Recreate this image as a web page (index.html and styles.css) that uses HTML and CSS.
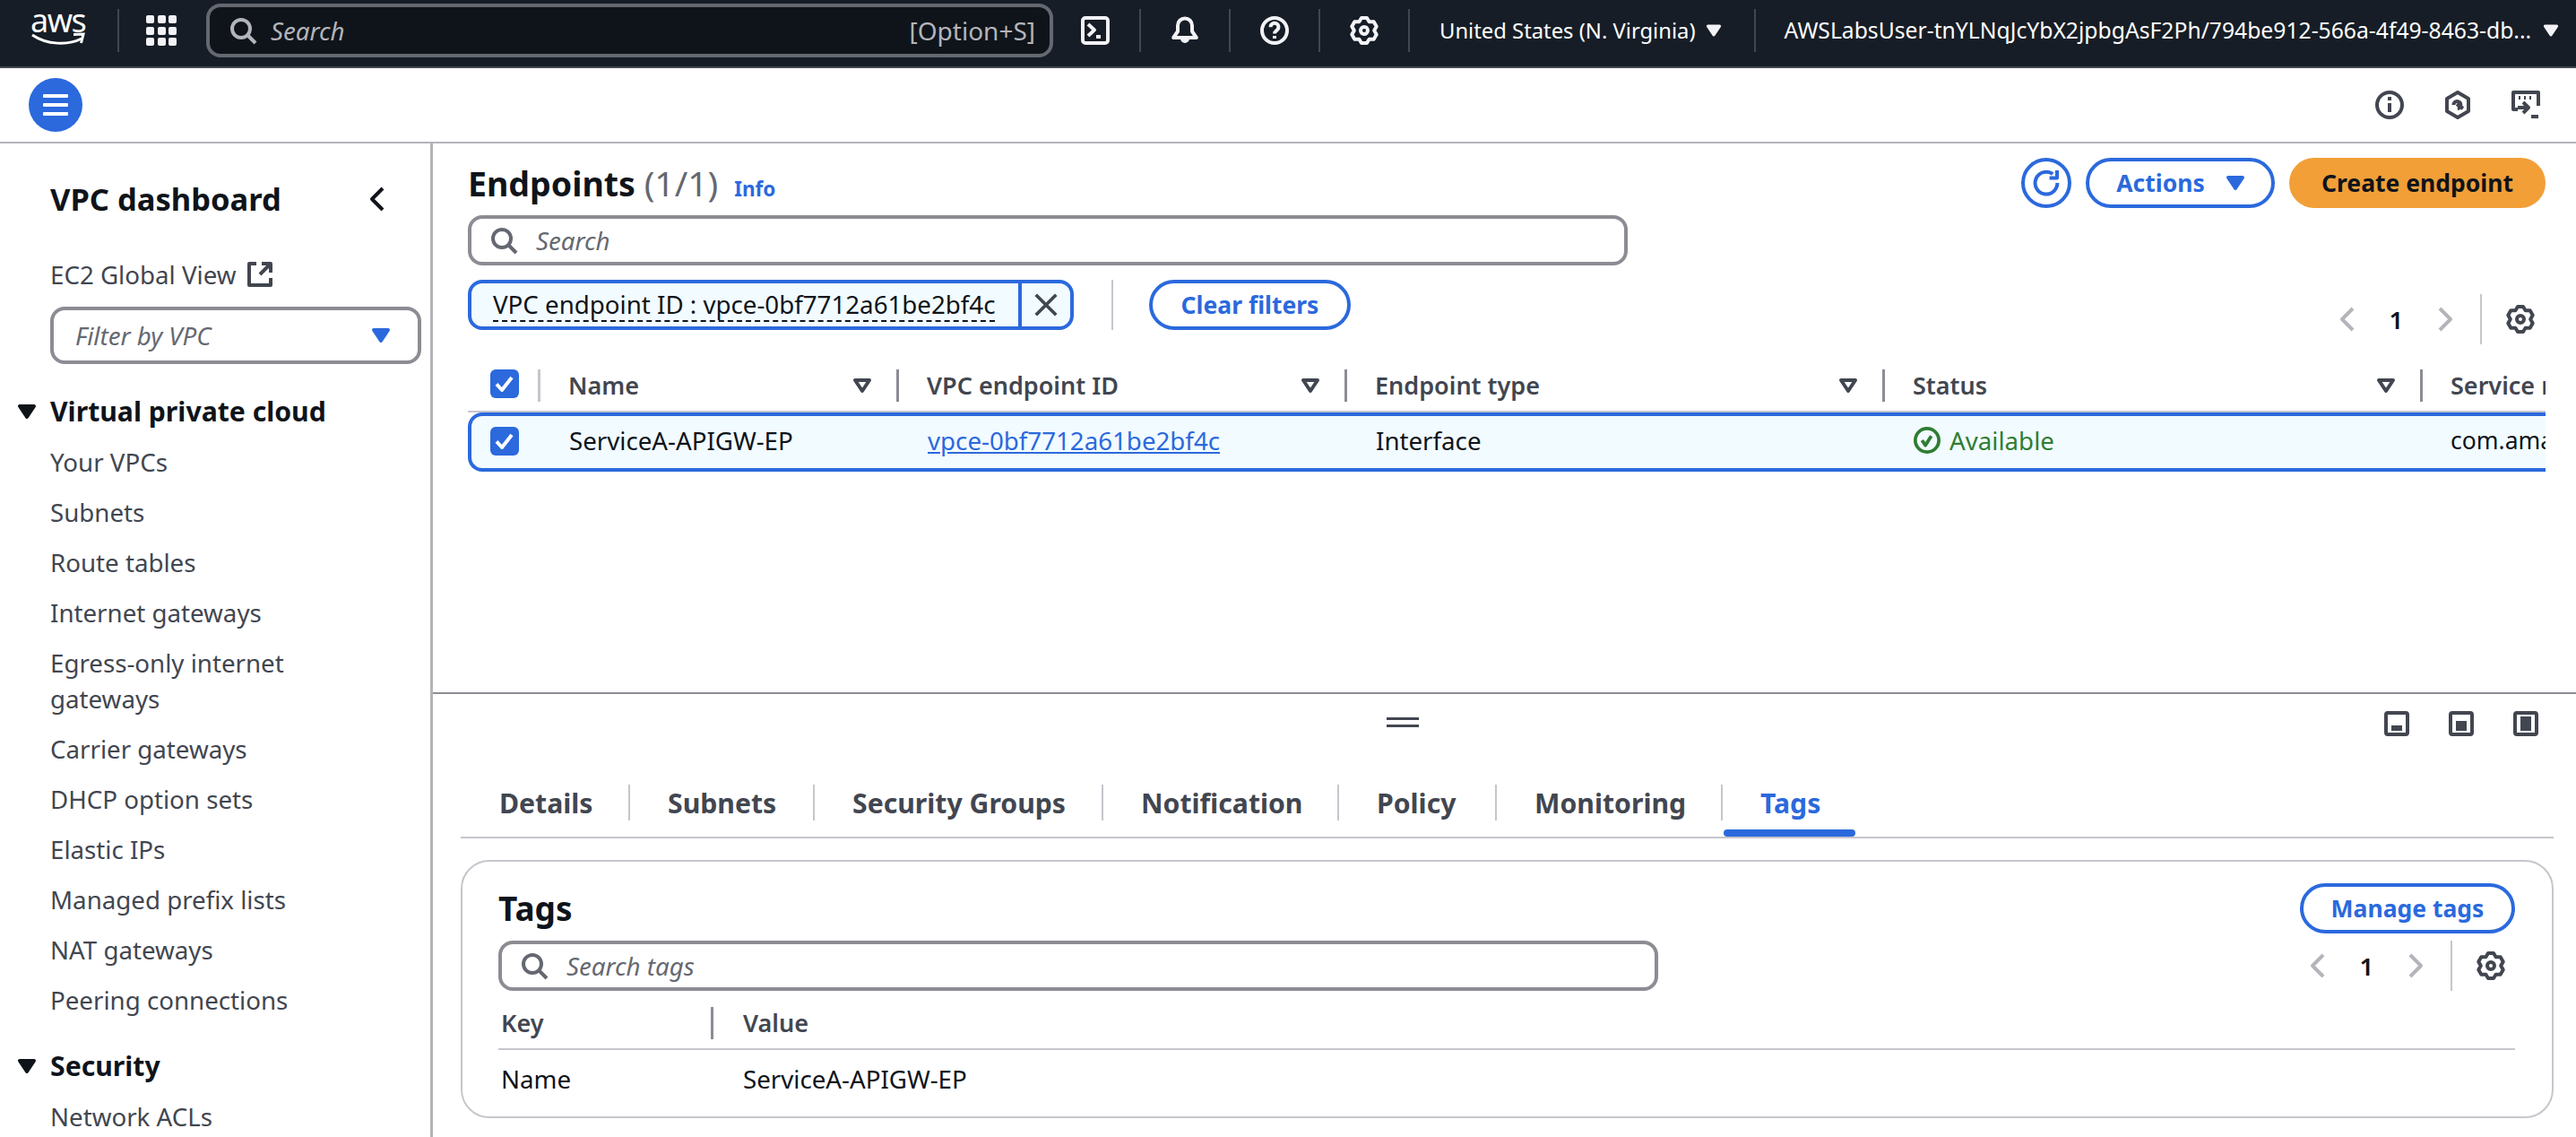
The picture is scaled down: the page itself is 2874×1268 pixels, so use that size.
FILE: index.html
```html
<!DOCTYPE html>
<html lang="en">
<head>
<meta charset="utf-8">
<title>Endpoints | VPC Console</title>
<link rel="stylesheet" href="styles.css">
</head>
<body>
<svg class="defs" aria-hidden="true">
  <symbol id="i-search" viewBox="0 0 16 16"><circle cx="7" cy="7" r="5"/><path d="m15 15-4.5-4.5"/></symbol>
  <symbol id="i-gear" viewBox="0 0 16 16"><path d="M6.5 1h3l1.3 2.15 2.55.03 1.5 2.6L13.6 8l1.25 2.22-1.5 2.6-2.55.03L9.5 15h-3l-1.3-2.15-2.55-.03-1.5-2.6L2.4 8 1.15 5.78l1.5-2.6 2.55-.03Z"/><circle cx="8" cy="8" r="2"/></symbol>
  <symbol id="i-shell" viewBox="0 0 16 16"><rect x="1" y="1" width="14" height="14" rx="1.5"/><path d="m4 4.5 3.5 3.2L4 11"/><path d="M8.5 11.5h2.5"/></symbol>
  <symbol id="i-bell" viewBox="0 0 16 16"><path d="M8 1.2A4 4 0 0 0 4 5.2v3.3L1.6 12h12.8L12 8.500V5.200a4 4 0 0 0-4-4Z"/><path d="M6.500 12.500a1.500 1.500 0 0 0 3 0"/></symbol>
  <symbol id="i-help" viewBox="0 0 16 16"><circle cx="8" cy="8" r="7"/><path d="M5.800 6.100a2.200 2.200 0 1 1 3.400 1.800C8.500 8.400 8 8.800 8 9.800"/><path d="M8 11v1.500"/></symbol>
  <symbol id="i-info" viewBox="0 0 16 16"><circle cx="8" cy="8" r="7"/><path d="M8 7v5"/><path d="M8 3.500V5.500"/></symbol>
  <symbol id="i-hex" viewBox="0 0 16 16"><path d="M8 1l6 3.500v7L8 15l-6-3.500v-7Z"/><path d="M5.700 8a2 2 0 1 1 2.200 2M7.500 7.500l3.500 2.500"/></symbol>
  <symbol id="i-feedback" viewBox="0 0 16 16"><path d="M3.500 10.500H1V1h14v7.500"/><path d="M4 4h1M7 4h1M10 4h1"/><path d="M3.500 9.500H9M6.500 6.500l3 3-3 3"/><path d="M11 14.500h4"/></symbol>
  <symbol id="i-external" viewBox="0 0 16 16"><path d="M14 7V2H9M14 2 8 8M6 2H2v12h12v-4"/></symbol>
  <symbol id="i-left" viewBox="0 0 16 16"><path d="M11 2 5 8l6 6"/></symbol>
  <symbol id="i-right" viewBox="0 0 16 16"><path d="m5 2 6 6-6 6"/></symbol>
  <symbol id="i-sort" viewBox="0 0 16 16"><path d="M4 5h8l-4 6Z"/></symbol>
  <symbol id="i-x" viewBox="0 0 16 16"><path d="m2 2 12 12M14 2 2 14"/></symbol>
  <symbol id="i-refresh" viewBox="0 0 16 16"><path d="M14.200 8a6.200 6.200 0 1 1-2.600-5"/><path d="M14 1v4.200H9.800"/></symbol>
  <symbol id="i-check" viewBox="0 0 16 16"><path d="m3.500 8.200 3 3.300 5.500-7"/></symbol>
  <symbol id="i-ok" viewBox="0 0 16 16"><circle cx="8" cy="8" r="7"/><path d="m5 8 2 3 3.500-5.500"/></symbol>
  <symbol id="i-panel1" viewBox="0 0 16 16"><rect x="2" y="2" width="12" height="12" rx="1"/><rect class="solid" x="5" y="9" width="6" height="3"/></symbol>
  <symbol id="i-panel2" viewBox="0 0 16 16"><rect x="2" y="2" width="12" height="12" rx="1"/><rect class="solid" x="5" y="6.500" width="6" height="5.500"/></symbol>
  <symbol id="i-panel3" viewBox="0 0 16 16"><rect x="2" y="2" width="12" height="12" rx="1"/><rect class="solid" x="5" y="4" width="6" height="8"/></symbol>
</svg>

<header class="topbar">
  <div class="logo">
    <span class="logo-text">aws</span>
    <svg class="smile" viewBox="0 0 62 16"><path d="M2 3c16 11 40 12 55 4"/><path d="M48 2.500 59 2l-2.500 10"/></svg>
  </div>
  <span class="top-sep sep-logo"></span>
  <div class="apps">
    <i></i><i></i><i></i><i></i><i></i><i></i><i></i><i></i><i></i>
  </div>
  <div class="top-search">
    <svg class="ic"><use href="#i-search"/></svg>
    <span class="top-search-text">Search</span>
    <span class="top-search-key">[Option+S]</span>
  </div>
  <svg class="ic"><use href="#i-shell"/></svg>
  <span class="top-sep"></span>
  <svg class="ic"><use href="#i-bell"/></svg>
  <span class="top-sep"></span>
  <svg class="ic"><use href="#i-help"/></svg>
  <span class="top-sep"></span>
  <svg class="ic"><use href="#i-gear"/></svg>
  <span class="top-sep"></span>
  <span class="top-menu top-region">United States (N. Virginia)</span>
  <svg class="ic caret caret-region"><use href="#i-sort"/></svg>
  <span class="top-sep sep-user"></span>
  <span class="top-menu top-user">AWSLabsUser-tnYLNqJcYbX2jpbgAsF2Ph/794be912-566a-4f49-8463-db...</span>
  <svg class="ic caret"><use href="#i-sort"/></svg>
</header>

<div class="subbar">
  <button class="burger" aria-label="Open navigation"><i></i><i></i><i></i></button>
  <div class="subbar-icons">
    <svg class="ic"><use href="#i-info"/></svg>
    <svg class="ic"><use href="#i-hex"/></svg>
    <svg class="ic"><use href="#i-feedback"/></svg>
  </div>
</div>

<div class="shell">
  <nav class="sidebar">
    <div class="side-head">
      <span>VPC dashboard</span>
      <svg class="ic"><use href="#i-left"/></svg>
    </div>
    <div class="side-global">EC2 Global View <svg class="ic"><use href="#i-external"/></svg></div>
    <div class="side-filter">
      <span>Filter by VPC</span>
      <svg class="ic"><use href="#i-sort"/></svg>
    </div>
    <div class="side-section"><svg class="ic"><use href="#i-sort"/></svg>Virtual private cloud</div>
    <ul class="side-list">
      <li>Your VPCs</li>
      <li>Subnets</li>
      <li>Route tables</li>
      <li>Internet gateways</li>
      <li>Egress-only internet gateways</li>
      <li>Carrier gateways</li>
      <li>DHCP option sets</li>
      <li>Elastic IPs</li>
      <li>Managed prefix lists</li>
      <li>NAT gateways</li>
      <li>Peering connections</li>
    </ul>
    <div class="side-section side-security"><svg class="ic"><use href="#i-sort"/></svg>Security</div>
    <ul class="side-list">
      <li>Network ACLs</li>
    </ul>
  </nav>

  <main class="main">
    <section class="list">
      <div class="list-head">
        <h1 class="title">Endpoints <span class="count">(1/1)</span></h1>
        <a class="info">Info</a>
        <div class="actions">
          <button class="btn btn-icon"><svg class="ic"><use href="#i-refresh"/></svg></button>
          <button class="btn btn-actions">Actions <svg class="ic"><use href="#i-sort"/></svg></button>
          <button class="btn btn-primary">Create endpoint</button>
        </div>
      </div>
      <div class="searchbox">
        <svg class="ic"><use href="#i-search"/></svg>
        <span>Search</span>
      </div>
      <div class="filter-row">
        <div class="chip">
          <span class="chip-body"><span class="chip-text">VPC endpoint ID : vpce-0bf7712a61be2bf4c</span></span>
          <span class="chip-close"><svg class="ic"><use href="#i-x"/></svg></span>
        </div>
        <span class="filter-sep"></span>
        <button class="btn btn-clear">Clear filters</button>
        <div class="pager pager-top">
          <svg class="ic off"><use href="#i-left"/></svg>
          <span class="pager-num">1</span>
          <svg class="ic off"><use href="#i-right"/></svg>
          <span class="pager-sep"></span>
          <svg class="ic"><use href="#i-gear"/></svg>
        </div>
      </div>

      <div class="table">
        <div class="t-head">
          <div class="t-sel"><span class="checkbox"><svg class="ic"><use href="#i-check"/></svg></span></div>
          <div class="th th-first"><span>Name</span><svg class="ic"><use href="#i-sort"/></svg></div>
          <div class="th"><span>VPC endpoint ID</span><svg class="ic"><use href="#i-sort"/></svg></div>
          <div class="th"><span>Endpoint type</span><svg class="ic"><use href="#i-sort"/></svg></div>
          <div class="th"><span>Status</span><svg class="ic"><use href="#i-sort"/></svg></div>
          <div class="th th-last"><span>Service name</span></div>
        </div>
        <div class="t-row">
          <div class="t-sel-row"><span class="checkbox"><svg class="ic"><use href="#i-check"/></svg></span></div>
          <div class="td">ServiceA-APIGW-EP</div>
          <div class="td"><a class="link">vpce-0bf7712a61be2bf4c</a></div>
          <div class="td">Interface</div>
          <div class="td td-ok"><svg class="ic"><use href="#i-ok"/></svg>Available</div>
          <div class="td td-last">com.amazonaws.us-east-1.execute-api</div>
        </div>
      </div>
    </section>

    <section class="split">
      <div class="split-top">
        <div class="handle"><i></i><i></i></div>
        <div class="split-icons">
          <svg class="ic"><use href="#i-panel1"/></svg>
          <svg class="ic"><use href="#i-panel2"/></svg>
          <svg class="ic"><use href="#i-panel3"/></svg>
        </div>
      </div>
      <div class="tabs">
        <div class="tab tab-first">Details</div>
        <div class="tab">Subnets</div>
        <div class="tab">Security Groups</div>
        <div class="tab">Notification</div>
        <div class="tab">Policy</div>
        <div class="tab">Monitoring</div>
        <div class="tab tab-active">Tags</div>
      </div>
      <div class="card">
        <div class="card-head">
          <h2 class="card-title">Tags</h2>
          <button class="btn btn-manage">Manage tags</button>
        </div>
        <div class="card-tools">
          <div class="searchbox">
            <svg class="ic"><use href="#i-search"/></svg>
            <span>Search tags</span>
          </div>
          <div class="pager pager-card">
            <svg class="ic off"><use href="#i-left"/></svg>
            <span class="pager-num">1</span>
            <svg class="ic off"><use href="#i-right"/></svg>
            <span class="pager-sep"></span>
            <svg class="ic"><use href="#i-gear"/></svg>
          </div>
        </div>
        <div class="tag-head">
          <div class="tag-key">Key</div>
          <div class="tag-value">Value</div>
        </div>
        <div class="tag-row">
          <div class="tag-key">Name</div>
          <div class="tag-cell">ServiceA-APIGW-EP</div>
        </div>
      </div>
    </section>
  </main>
</div>
</body>
</html>
```
FILE: styles.css
```css
* { box-sizing: border-box; }
html, body { margin: 0; padding: 0; }
body {
  width: 2874px;
  height: 1268px;
  overflow: hidden;
  background: #fff;
  color: #0f141a;
  font-family: "Noto Sans", "Open Sans", sans-serif;
  font-size: 27.7px;
  line-height: 40px;
}
.defs { display: none; }
button { font: inherit; background: none; cursor: pointer; padding: 0; }
h1, h2 { margin: 0; }
ul { list-style: none; margin: 0; padding: 0; }

.ic {
  width: 32px;
  height: 32px;
  flex: none;
  fill: none;
  stroke: currentColor;
  stroke-width: 2;
  stroke-linejoin: round;
}
.solid { fill: currentColor; stroke: none; }

/* top bar */
.topbar {
  height: 76px;
  background: #161d26;
  border-bottom: 2px solid #424650;
  color: #f3f3f7;
  display: flex;
  align-items: center;
  padding: 0 0 6px 34px;
}
.logo { width: 62px; height: 40px; display: flex; flex-direction: column; }
.logo-text {
  color: #fff;
  font-size: 36px;
  line-height: 26px;
  height: 26px;
  letter-spacing: -1.500px;
  margin-top: -4px;
}
.smile { width: 62px; height: 16px; fill: none; stroke: #fff; stroke-width: 3; flex: none; }
.top-sep { width: 2px; height: 48px; background: #424650; margin: 0 33px; flex: none; }
.sep-logo { margin: 0 30px 0 35px; }
.sep-user { margin: 0 32px 0 32px; }
.apps { width: 34px; display: grid; grid-template-columns: repeat(3, 9px); gap: 3.500px; }
.apps i { height: 9px; background: #f3f3f7; border-radius: 2px; display: block; }
.top-search {
  width: 945px;
  height: 60px;
  margin: 0 31px 0 33px;
  border: 4px solid #656871;
  border-radius: 16px;
  background: #0f141a;
  display: flex;
  align-items: center;
  padding: 0 16px 0 21px;
  color: #b4b4bb;
}
.top-search .ic { margin-right: 15px; }
.top-search-text { font-style: italic; font-size: 27.7px; }
.top-search-key { margin-left: auto; font-size: 28px; }
.top-menu { color: #fff; white-space: nowrap; }
.top-region { font-size: 23.8px; }
.top-user { font-size: 24.7px; }
.caret { width: 26px; height: 26px; fill: #f3f3f7; margin-left: 9px; }
.caret-region { margin-left: 7px; }

/* sub bar */
.subbar {
  height: 84px;
  border-bottom: 2px solid #b4b4bb;
  display: flex;
  align-items: center;
  padding: 0 40px 0 32px;
  color: #424650;
}
.burger {
  width: 60px;
  height: 60px;
  border-radius: 50%;
  border: 0;
  background: #2b69dd;
  display: flex;
  flex-direction: column;
  align-items: center;
  justify-content: center;
  gap: 6px;
}
.burger i { width: 28px; height: 4px; background: #fff; display: block; border-radius: 1px; }
.subbar-icons { margin-left: auto; display: flex; gap: 44px; }

/* shell */
.shell { display: flex; height: 1108px; overflow: hidden; }

/* sidebar */
.sidebar {
  width: 483px;
  flex: none;
  border-right: 3px solid #b4b4bb;
  padding: 40px 10px 0 56px;
  color: #424650;
}
.side-head {
  height: 44px;
  display: flex;
  align-items: center;
  justify-content: space-between;
  color: #0f141a;
  font-size: 34.5px;
  font-weight: 700;
  padding-right: 33px;
}
.side-global {
  margin-top: 42px;
  height: 40px;
  display: flex;
  align-items: center;
  gap: 11px;
}
.side-filter {
  margin-top: 16px;
  width: 414px;
  height: 64px;
  border: 4px solid #8c8c94;
  border-radius: 16px;
  display: flex;
  align-items: center;
  justify-content: space-between;
  padding: 0 25px 0 24px;
  color: #656871;
  font-style: italic;
}
.side-filter .ic { color: #2b69dd; fill: #2b69dd; }
.side-section {
  margin: 33px 0 0 -42px;
  height: 40px;
  display: flex;
  align-items: center;
  gap: 10px;
  color: #0f141a;
  font-size: 30.2px;
  font-weight: 700;
}
.side-section .ic { fill: #0f141a; }
.side-security { margin-top: 26px; }
.side-list { margin-top: 8px; padding-right: 60px; }
.side-list li { padding: 8px 0; }

/* main */
.main { flex: 1; min-width: 0; display: flex; flex-direction: column; }
.list { height: 612px; padding: 16px 34px 0 39px; }
.list-head { display: flex; align-items: center; height: 56px; }
.title { font-size: 37.5px; font-weight: 700; line-height: 56px; white-space: nowrap; }
.count { color: #656871; font-weight: 400; font-size: 39px; }
.info { color: #2b69dd; font-size: 22.5px; font-weight: 700; margin: 14px 0 0 18px; }
.actions { margin-left: auto; display: flex; gap: 16px; }
.btn {
  height: 56px;
  border-radius: 28px;
  border: 4px solid #2b69dd;
  color: #2b69dd;
  font-size: 26.5px;
  font-weight: 700;
  display: flex;
  align-items: center;
  justify-content: center;
  white-space: nowrap;
}
.btn-icon { width: 56px; }
.btn-actions { width: 211px; gap: 18px; padding-left: 6px; }
.btn-actions .ic { fill: #2b69dd; }
.btn-primary { width: 286px; background: #f29f38; border-color: #f29f38; color: #0f141a; }
.btn-clear { width: 225px; margin-left: 40px; }
.btn-manage { width: 240px; }

.searchbox {
  width: 1294px;
  height: 56px;
  border: 4px solid #8c8c94;
  border-radius: 16px;
  display: flex;
  align-items: center;
  gap: 20px;
  padding: 0 0 0 20px;
  color: #656871;
  font-style: italic;
}
.list > .searchbox { margin-top: 8px; }

.filter-row { margin-top: 16px; display: flex; align-items: flex-start; height: 72px; }
.chip {
  width: 676px;
  height: 56px;
  border: 4px solid #2b69dd;
  border-radius: 16px;
  background: #f2fbff;
  display: flex;
}
.chip-body { width: 614px; padding-left: 24px; border-right: 4px solid #2b69dd; display: flex; align-items: center; }
.chip-text { line-height: 36px; border-bottom: 2px dashed #0f141a; white-space: nowrap; }
.chip-close { flex: 1; display: flex; align-items: center; justify-content: center; color: #424650; }
.chip-close .ic { width: 30px; height: 30px; }
.filter-sep { width: 2px; height: 56px; background: #c6c6cd; margin-left: 42px; }

.pager { margin-left: auto; display: flex; align-items: center; height: 56px; }
.pager-top { margin-top: 16px; margin-right: 12px; }
.pager-card { margin-right: 11px; }
.pager .ic { color: #424650; }
.pager .off { color: #b4b4bb; }
.pager-num { width: 77px; text-align: center; font-weight: 600; }
.pager-sep { width: 2px; height: 56px; background: #c6c6cd; margin: 0 27px 0 23px; }

/* table */
.table { margin-top: 28px; width: 2318px; overflow: hidden; }
.t-head {
  display: grid;
  grid-template-columns: 78px 400px 500px 600px 600px 140px;
  height: 48px;
  border-bottom: 2px solid #c6c6cd;
  align-items: start;
  color: #424650;
  font-size: 27px;
  font-weight: 600;
}
.t-sel { padding-left: 25px; height: 36px; display: flex; align-items: flex-start; }
.th {
  height: 36px;
  border-left: 3px solid #8c8c94;
  padding: 0 22px 0 31px;
  display: flex;
  align-items: center;
  justify-content: space-between;
  white-space: nowrap;
  overflow: hidden;
}
.th-first { border-left-color: #c6c6cd; }
.th-last { padding-right: 0; justify-content: flex-start; }
.checkbox {
  width: 32px;
  height: 32px;
  background: #2b69dd;
  border-radius: 6px;
  display: flex;
  color: #fff;
  flex: none;
}
.t-row {
  display: grid;
  grid-template-columns: 74px 400px 500px 600px 600px 140px;
  height: 66px;
  border: 4px solid #2b69dd;
  border-right: 0;
  border-radius: 16px 0 0 16px;
  background: #f2fbff;
  align-items: center;
}
.t-sel-row { padding-left: 21px; display: flex; margin-bottom: 2px; }
.td { padding-left: 35px; padding-bottom: 4px; white-space: nowrap; overflow: hidden; }
.td-last { padding-left: 34px; font-size: 26.5px; }
.link { color: #2b69dd; text-decoration: underline; }
.td-ok { display: flex; align-items: center; gap: 10px; color: #2f7d32; }
.td-ok .ic { width: 30px; height: 30px; }

/* split panel */
.split { flex: 1; border-top: 2px solid #8c8c94; min-height: 0; }
.split-top { display: flex; align-items: center; height: 32px; margin-top: 17px; padding: 0 40px 0 1064px; color: #424650; }
.handle { width: 36px; display: flex; flex-direction: column; gap: 5px; margin-top: -4px; }
.handle i { height: 3px; background: #424650; display: block; }
.split-icons { margin-left: auto; display: flex; gap: 40px; }
.tabs {
  margin: 52px 25px 0 31px;
  display: grid;
  grid-template-columns: 187px 206px 322px 263px 176px 252px 153px 1fr;
  height: 60px;
  border-bottom: 2px solid #c6c6cd;
  color: #424650;
  font-size: 30.2px;
  font-weight: 700;
}
.tab { height: 40px; border-left: 2px solid #c6c6cd; padding-left: 42px; line-height: 42px; white-space: nowrap; position: relative; }
.tab-first { border-left: 0; padding-left: 43px; }
.tab-active { color: #2b69dd; }
.tab-active::after {
  content: "";
  position: absolute;
  left: 1px;
  bottom: -18px;
  width: 147px;
  height: 8px;
  border-radius: 4px;
  background: #2b69dd;
}
.card {
  margin: 24px 25px 0 31px;
  height: 288px;
  border: 2px solid #c6c6cd;
  border-radius: 32px;
  padding: 24px 41px 0 40px;
}
.card-head { display: flex; align-items: center; justify-content: space-between; height: 56px; }
.card-title { font-size: 37px; font-weight: 700; line-height: 56px; }
.card-tools { display: flex; margin-top: 8px; }
.tag-head {
  margin-top: 18px;
  height: 48px;
  border-bottom: 2px solid #c6c6cd;
  display: grid;
  grid-template-columns: 237px 1fr;
  align-items: start;
  color: #424650;
  font-size: 27px;
  font-weight: 600;
}
.tag-key { padding-left: 3px; }
.tag-value { height: 36px; line-height: 36px; border-left: 3px solid #8c8c94; padding-left: 33px; }
.tag-head .tag-key { line-height: 36px; }
.tag-row { height: 66px; padding-bottom: 3px; display: grid; grid-template-columns: 237px 1fr; align-items: center; }
.tag-cell { padding-left: 36px; }
```
